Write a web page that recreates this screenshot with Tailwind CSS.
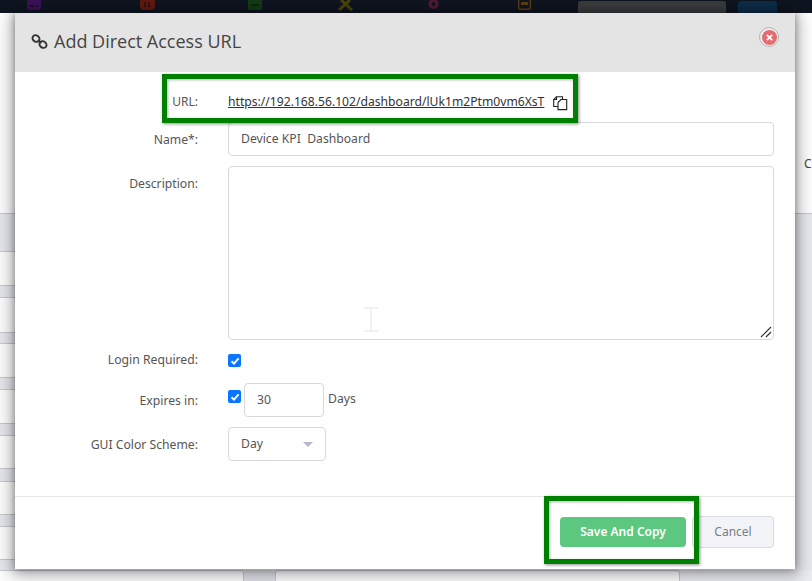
<!DOCTYPE html>
<html>
<head>
<meta charset="utf-8">
<script src="https://cdn.jsdelivr.net/npm/@tailwindcss/browser@4"></script>
</head>
<body class="m-0 bg-white">
<div class="relative w-[812px] h-[581px] overflow-hidden bg-white font-['Noto_Sans','Open_Sans',sans-serif]">
  <!-- page behind the dialog -->
  <div class="flex flex-col h-full">
    <div class="flex items-start h-[13px] shrink-0 bg-[#0f1520] overflow-hidden">
      <svg class="ml-[27px] w-[14px] h-[10px]" viewBox="0 0 14 10"><path d="M0 0 H14 V8 Q14 10 12 10 H2 Q0 10 0 8 Z" fill="#3a1258"/><path d="M3 6 H7 M9 6 H11" stroke="#1c0a2c" stroke-width="1.5"/></svg>
      <svg class="ml-[99px] w-[15px] h-[10px]" viewBox="0 0 15 10"><path d="M0 0 H15 V6 Q15 10 11 10 H4 Q0 10 0 6 Z" fill="#601a12"/><path d="M5 2 V7 M9 2 V7" stroke="#2c0d0a" stroke-width="1.5"/></svg>
      <svg class="ml-[93px] w-[14px] h-[10px]" viewBox="0 0 14 10"><path d="M0 0 H14 V10 H0 Z" fill="#123c14"/><path d="M3 5 H11" stroke="#0a1e0c" stroke-width="1.5"/></svg>
      <svg class="ml-[75px] w-[17px] h-[11px]" viewBox="0 0 17 11" fill="none" stroke="#4a4508" stroke-width="3"><path d="M4 0 L15 10 M13 0 L2 10"/></svg>
      <svg class="ml-[74px] w-[11px] h-[11px]" viewBox="0 0 11 11"><circle cx="5.5" cy="4" r="3.5" fill="none" stroke="#571a33" stroke-width="3"/></svg>
      <svg class="ml-[79px] w-[13px] h-[10px]" viewBox="0 0 13 10"><path d="M0.7 0 V8 Q0.7 9.3 2 9.3 H11 Q12.3 9.3 12.3 8 V0" fill="none" stroke="#5c3f0d" stroke-width="1.4"/><path d="M3 2 H10 V5 H3 Z" fill="#5c3f0d"/></svg>
      <div class="ml-[47px] mt-[1px] w-[148px] h-[12px] rounded-t-[3px] bg-[#3b3c3e]"></div>
      <div class="ml-[12px] mt-[1px] w-[39px] h-[12px] rounded-t-[3px] bg-[#0d2d48]"></div>
    </div>
    <div class="flex-1 flex justify-between bg-white">
      <div class="flex flex-col w-[15px] pt-[200px]">
        <div class="h-[39px] border-y border-[#c8cad2] bg-[#e8e9ef]"></div>
        <div class="h-[13px] mt-[33px] border-y border-[#c8cad2] bg-[#e8e9ef]"></div>
        <div class="h-[12px] mt-[34px] border-y border-[#c8cad2] bg-[#e8e9ef]"></div>
        <div class="h-[13px] mt-[33px] border-y border-[#c8cad2] bg-[#e8e9ef]"></div>
        <div class="h-[13px] mt-[33px] border-y border-[#c8cad2] bg-[#e8e9ef]"></div>
        <div class="h-[14px] mt-[32px] border-y border-[#c8cad2] bg-[#e8e9ef]"></div>
        <div class="h-[13px] mt-[32px] border-y border-[#c8cad2] bg-[#e8e9ef]"></div>
        <div class="h-[12px] mt-[32px] border-t border-[#c8cad2] bg-[#e8e9ef]"></div>
      </div>
      <div class="flex flex-col w-[17px] pt-[143px] text-[12px] text-[#444]">
        <span class="pl-[9px] leading-[16px]">C</span>
        <div class="flex-1 mt-[41px] border-t border-[#c8cad2] bg-[#e9eaf0]"></div>
      </div>
    </div>
  </div>
  <!-- fields peeking out under the dialog -->
  <div class="absolute left-0 top-[570px] w-[244px] h-[11px] border-r border-t border-[#c8cad2] rounded-tr-[3px] bg-white"></div>
  <div class="absolute left-[244px] top-[570px] w-[31px] h-[11px] bg-[#e3e4ea]"></div>
  <div class="absolute left-[275px] top-[570px] w-[405px] h-[11px] border-x border-t border-[#c8cad2] rounded-t-[3px] bg-white"></div>
  <div class="absolute left-[680px] top-[570px] w-[132px] h-[11px] bg-[#eceDF2]"></div>

  <!-- dialog -->
  <div class="absolute left-[15px] top-[13px] flex flex-col w-[780px] h-[556px] bg-white shadow-[0_0_7px_rgba(0,0,0,0.35),0_3px_16px_4px_rgba(0,0,0,0.3)]">
    <div class="relative flex items-center h-[59px] shrink-0 bg-[#e4e4e4] pl-[15px] pb-[4px] text-[#444]">
      <svg class="w-[19px] h-[18px] mr-[5px] mt-[3px]" viewBox="0 0 19 18" fill="none" stroke="#333" stroke-width="1.9"><ellipse cx="6" cy="5.6" rx="3.7" ry="3.1" transform="rotate(35 6 5.6)"/><ellipse cx="13" cy="11.6" rx="3.7" ry="3.1" transform="rotate(35 13 11.6)"/><path d="M7.5 7.5 L11.5 10"/></svg>
      <span class="text-[18px] leading-[24px] font-['Open_Sans',sans-serif] text-[#444]">Add Direct Access URL</span>
      <button class="absolute left-[744px] top-[14px] flex items-center justify-center w-[20px] h-[20px] rounded-full border-[1.5px] border-[#b5b5b5] bg-[#ececec]">
        <span class="flex items-center justify-center w-[15px] h-[15px] rounded-full bg-[#e26d71]">
          <svg class="w-[7px] h-[7px]" viewBox="0 0 8 8" stroke="#fff" stroke-width="2.2"><path d="M1 1 L7 7 M7 1 L1 7"/></svg>
        </span>
      </button>
    </div>

    <div class="flex-1 text-[12.2px] text-[#555]">
      <div class="flex items-center h-[50px] pt-[10px]">
        <span class="w-[183px] text-right leading-[16px] text-[12px]">URL:</span>
        <a class="ml-[30px] text-[#333] underline leading-[16px] text-[12.15px]">https://192.168.56.102/dashboard/lUk1m2Ptm0vm6XsT</a>
        <svg class="ml-[9px] w-[15px] h-[15px] mt-[2px]" viewBox="0 0 15 15" fill="none" stroke="#222" stroke-width="1.1"><path d="M5 10.5 H0.7 V3.5 L3.5 0.7 H9.5 V3.5"/><path d="M3.5 0.7 V3.5 H0.7"/><path d="M5 13.6 V6.5 L8 3.5 H13.7 V13.6 Z"/></svg>
      </div>

      <div class="flex items-center h-[34px]">
        <span class="w-[183px] text-right leading-[16px] pt-[1px]">Name*:</span>
        <div class="ml-[30px] flex items-center w-[546px] h-[34px] rounded-[4px] border border-[#d8d8e0] pl-[12px] pt-[1px] text-[#555]">Device KPI&nbsp; Dashboard</div>
      </div>

      <div class="flex items-start mt-[10px]">
        <span class="w-[183px] text-right leading-[16px] pt-[10px]">Description:</span>
        <div class="relative ml-[30px] w-[546px] h-[174px] rounded-[4px] border border-[#d8d8e0]">
          <svg class="absolute right-[1px] bottom-[1px] w-[13px] h-[13px]" viewBox="0 0 13 13" stroke="#333" stroke-width="1.2"><path d="M2 12 L12 2 M7 12 L12 7"/></svg>
          <svg class="absolute left-[135px] top-[140px] w-[14px] h-[25px]" viewBox="0 0 14 25" stroke="#f1f1f1" stroke-width="2" fill="none"><path d="M0 1 H14 M0 24 H14 M7 1 V24"/></svg>
        </div>
      </div>

      <div class="flex items-center h-[16px] mt-[12px]">
        <span class="w-[183px] text-right leading-[16px]">Login Required:</span>
        <span class="ml-[30px] flex items-center justify-center w-[13px] h-[13px] rounded-[2px] bg-[#0a75ff] mt-[1px]">
          <svg class="w-[10px] h-[10px]" viewBox="0 0 10 10" fill="none" stroke="#fff" stroke-width="2"><path d="M1.5 5.2 L4 7.6 L8.6 2.4"/></svg>
        </span>
      </div>

      <div class="flex items-center h-[34px] mt-[15px]">
        <span class="w-[183px] text-right leading-[16px] pt-[1px]">Expires in:</span>
        <span class="ml-[30px] flex items-center justify-center w-[13px] h-[13px] rounded-[2px] bg-[#0a75ff] -mt-[7px]">
          <svg class="w-[10px] h-[10px]" viewBox="0 0 10 10" fill="none" stroke="#fff" stroke-width="2"><path d="M1.5 5.2 L4 7.6 L8.6 2.4"/></svg>
        </span>
        <div class="ml-[3px] flex items-center w-[80px] h-[34px] rounded-[4px] border border-[#d8d8e0] pl-[12px] pt-[1px] text-[#555]">30</div>
        <span class="ml-[4px] -mt-[2px] leading-[16px]">Days</span>
      </div>

      <div class="flex items-center h-[34px] mt-[10px]">
        <span class="w-[183px] text-right leading-[16px] pt-[1px]">GUI Color Scheme:</span>
        <div class="ml-[30px] flex items-center justify-between w-[98px] h-[34px] rounded-[4px] border border-[#d8d8e0] pl-[12px] pr-[12px] text-[#555]">
          <span>Day</span>
          <span class="w-0 h-0 mt-[1px] border-x-[5px] border-x-transparent border-t-[5px] border-t-[#b4b8c8]"></span>
        </div>
      </div>
    </div>

    <div class="flex items-center justify-end gap-[6px] h-[73px] shrink-0 border-t border-[#e6e6e6] pr-[21px] pb-[2px] text-[12px] font-semibold">
      <button class="w-[126px] h-[30px] rounded-[4px] bg-[#5cc77f] text-white text-center">Save And Copy</button>
      <button class="w-[82px] h-[32px] rounded-[4px] border border-[#d8dae4] bg-[#f3f4f8] text-[#777c88] font-normal text-center">Cancel</button>
    </div>
  </div>

  <!-- green annotation frames -->
  <div class="absolute left-[162px] top-[74px] w-[416px] h-[49px] border-[5px] border-[#008000] shadow-[1px_1px_3px_rgba(0,0,0,0.45),inset_1px_1px_3px_rgba(0,0,0,0.3)]"></div>
  <div class="absolute left-[544px] top-[496px] w-[155px] h-[68px] border-[5px] border-[#008000] shadow-[1px_1px_3px_rgba(0,0,0,0.45),inset_1px_1px_3px_rgba(0,0,0,0.3)]"></div>
</div>
</body>
</html>
